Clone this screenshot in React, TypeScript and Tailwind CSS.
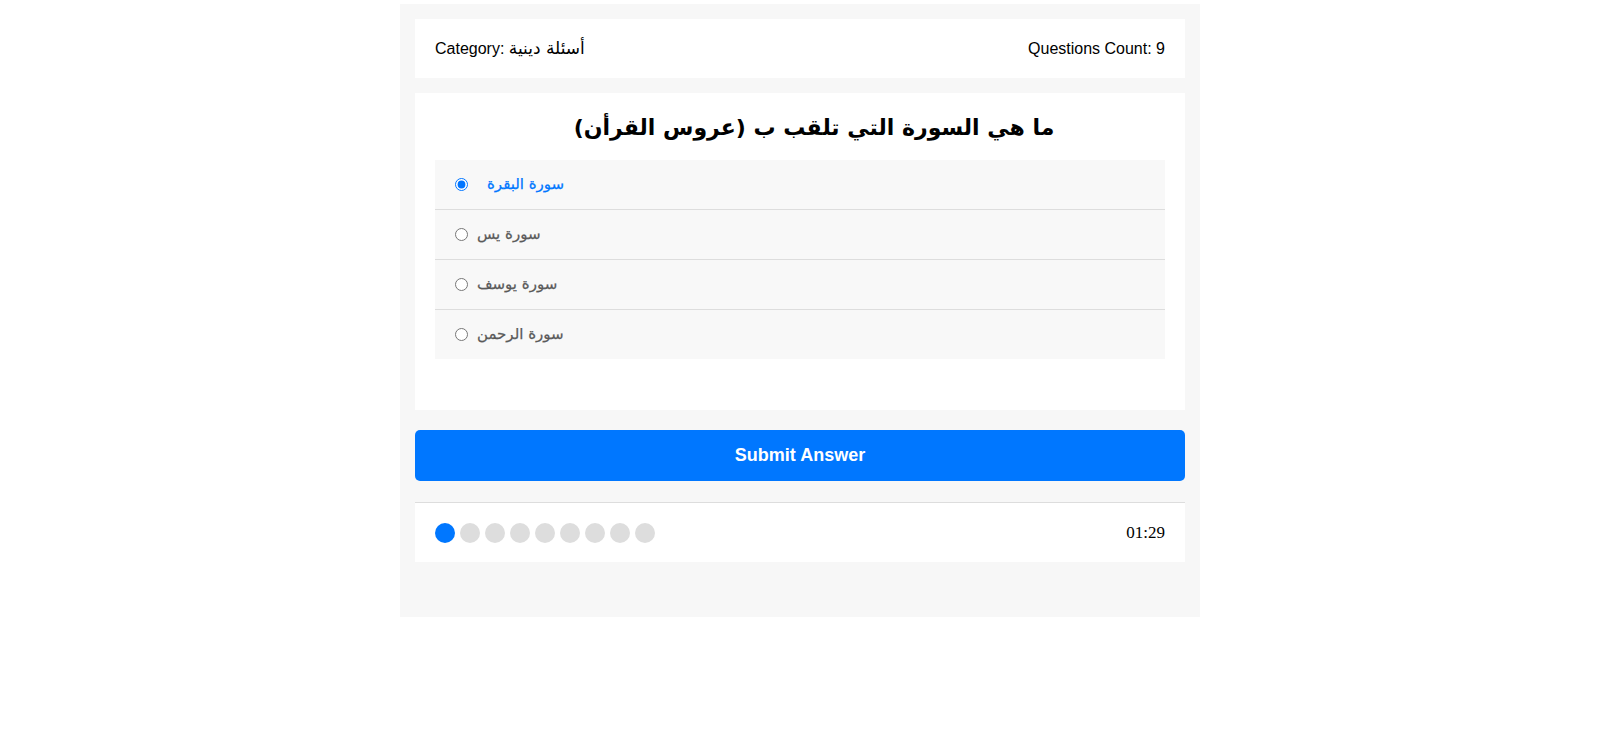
import React from "react";

const options = ["سورة البقرة", "سورة يس", "سورة يوسف", "سورة الرحمن"];

export default function App() {
  return (
    <div className="min-h-screen bg-white pt-[4px]" style={{ fontFamily: '"Liberation Sans", "DejaVu Sans", sans-serif' }}>
      <div className="mx-auto w-[800px] bg-[#f7f7f7] px-[15px] pt-[15px] pb-[55px]">
        <div className="flex h-[59px] items-center justify-between bg-white px-5 text-[16px] leading-[19px] text-black">
          <div>
            Category: <span style={{ fontFamily: '"DejaVu Sans", sans-serif' }} className="text-[17px]">أسئلة دينية</span>
          </div>
          <div>Questions Count: 9</div>
        </div>

        <div className="mt-[15px] bg-white px-5 pt-[20px] pb-[51px]">
          <h2
            dir="rtl"
            className="mb-[17px] pl-[28px] text-center text-[22px] font-bold leading-[30px] text-black"
            style={{ fontFamily: '"DejaVu Sans", sans-serif' }}
          >
            ما هي السورة التي تلقب ب (عروس القرأن)
          </h2>
          <div>
            {options.map((o, i) => (
              <label
                key={o}
                className={`flex items-center bg-[#f8f8f8] pl-[20px] ${i < options.length - 1 ? "h-[50px] border-b border-[#dddddd]" : "h-[49px]"}`}
              >
                <input
                  type="radio"
                  name="q"
                  checked={i === 0}
                  onChange={() => {}}
                  className="m-0 h-[13px] w-[13px]"
                />
                <span
                  className={`text-[15px] ${i === 0 ? "ml-[19px] text-[#0077ff]" : "ml-[9px] text-[#5a5a5a]"}`}
                  style={{ fontFamily: '"DejaVu Sans", sans-serif', WebkitTextStroke: "0.25px currentColor" }}
                >
                  {o}
                </span>
              </label>
            ))}
          </div>
        </div>

        <button className="mt-[20px] h-[51px] w-full rounded-[5px] bg-[#0077ff] text-[18px] font-bold text-white">
          Submit Answer
        </button>

        <div className="mt-[21px] flex h-[60px] items-center justify-between border-t border-[#dddddd] bg-white px-5">
          <div className="flex gap-[5px]">
            {Array.from({ length: 9 }).map((_, i) => (
              <div
                key={i}
                className={`h-[20px] w-[20px] rounded-full ${i === 0 ? "bg-[#0077ff]" : "bg-[#dddddd]"}`}
              />
            ))}
          </div>
          <div className="text-[17px] text-black" style={{ fontFamily: '"Liberation Serif", serif' }}>
            01:29
          </div>
        </div>
      </div>
    </div>
  );
}
